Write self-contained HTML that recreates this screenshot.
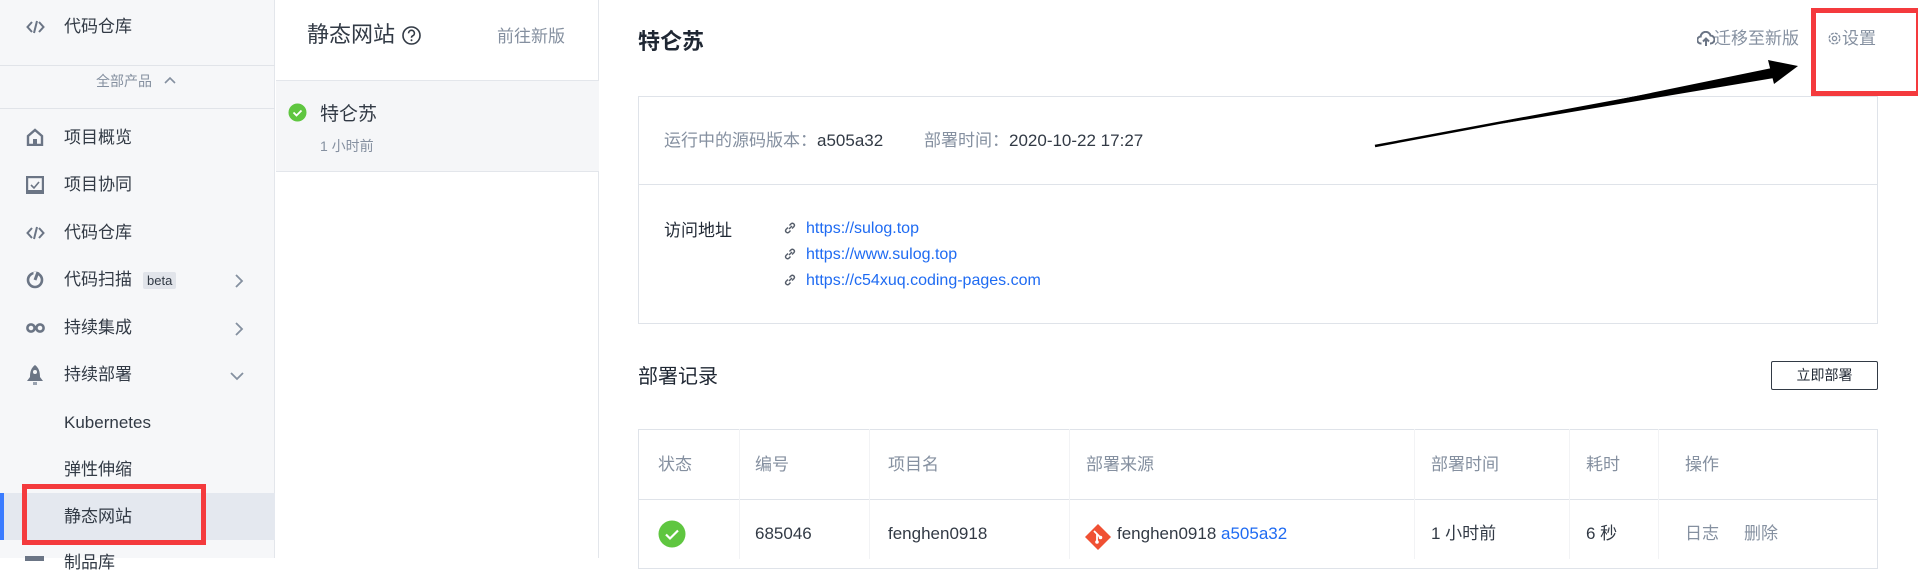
<!DOCTYPE html>
<html><head><meta charset="utf-8"><style>
*{margin:0;padding:0;box-sizing:border-box}
body{width:1918px;height:558px;overflow:hidden;background:#fff;font-family:"Liberation Sans","Noto Sans CJK SC",sans-serif;color:#323a45;position:relative}
.a{position:absolute;white-space:nowrap;line-height:1}
.sb{position:absolute;left:0;top:0;width:275px;height:558px;background:#f6f7f9;border-right:1px solid #e3e6eb}
.mid{position:absolute;left:276px;top:0;width:323px;height:558px;border-right:1px solid #e3e6eb}
.si{font-size:17px;color:#323a45}
.ic{position:absolute}
.g{color:#8590a0}
.lnk{color:#1f6bf2;font-size:16px}
.th{font-size:17px;color:#8590a0}
.td{font-size:17px;color:#323a45}
.vl{position:absolute;top:429px;width:1px;height:130px;background:#f2f3f5}
</style></head><body>
<div class="sb"></div>
<svg class="ic" style="left:26px;top:18px" width="19" height="18" viewBox="0 0 19 18"><path d="M6 4L1.5 9 6 14M13 4l4.5 5-4.5 5M11 3L8 15" stroke="#6b7585" stroke-width="2" fill="none"/></svg>
<div class="a si" style="left:64px;top:18px">代码仓库</div>
<div style="position:absolute;left:0;top:65px;width:275px;height:1px;background:#e1e4e9"></div>
<div class="a g" style="left:96px;top:74px;font-size:14px">全部产品</div>
<svg class="ic" style="left:164px;top:76px" width="12" height="8"><path d="M1 7l5-5 5 5" stroke="#8590a0" stroke-width="1.6" fill="none"/></svg>
<div style="position:absolute;left:0;top:108px;width:275px;height:1px;background:#e1e4e9"></div>

<svg class="ic" style="left:26px;top:128px" width="18" height="18"><path d="M2 8L9 2l7 6v9H2z" stroke="#6b7585" stroke-width="2.4" fill="none"/><rect x="7" y="11" width="4" height="6" fill="#6b7585"/></svg>
<div class="a si" style="left:64px;top:129px">项目概览</div>
<svg class="ic" style="left:26px;top:176px" width="18" height="18"><rect x="1" y="1" width="16" height="16" stroke="#6b7585" stroke-width="2.4" fill="none"/><path d="M5 9l3 3 5-6" stroke="#6b7585" stroke-width="1.6" fill="none"/><rect x="1" y="14" width="16" height="3" fill="#6b7585"/></svg>
<div class="a si" style="left:64px;top:176px">项目协同</div>
<svg class="ic" style="left:26px;top:224px" width="19" height="18" viewBox="0 0 19 18"><path d="M6 4L1.5 9 6 14M13 4l4.5 5-4.5 5M11 3L8 15" stroke="#6b7585" stroke-width="2" fill="none"/></svg>
<div class="a si" style="left:64px;top:224px">代码仓库</div>
<svg class="ic" style="left:26px;top:271px" width="18" height="18"><circle cx="9" cy="9" r="7" stroke="#6b7585" stroke-width="2.6" fill="none"/><path d="M9 9V1" stroke="#f6f7f9" stroke-width="3"/><path d="M9 9l3-8" stroke="#6b7585" stroke-width="3"/></svg>
<div class="a si" style="left:64px;top:271px">代码扫描</div>
<div class="a" style="left:143px;top:272px;font-size:13px;background:#e1e4ea;padding:2px 4px;border-radius:2px;color:#323a45">beta</div>
<svg class="ic" style="left:234px;top:274px" width="10" height="14"><path d="M2 1l6 6-6 6" stroke="#8590a0" stroke-width="1.8" fill="none"/></svg>
<svg class="ic" style="left:26px;top:322px" width="19" height="12"><circle cx="5" cy="6" r="3.6" stroke="#6b7585" stroke-width="2.6" fill="none"/><circle cx="14" cy="6" r="3.6" stroke="#6b7585" stroke-width="2.6" fill="none"/></svg>
<div class="a si" style="left:64px;top:319px">持续集成</div>
<svg class="ic" style="left:234px;top:322px" width="10" height="14"><path d="M2 1l6 6-6 6" stroke="#8590a0" stroke-width="1.8" fill="none"/></svg>
<svg class="ic" style="left:26px;top:364px" width="18" height="22"><path d="M9 1c4 3 5 7 5 12l3 4H1l3-4C4 8 5 4 9 1z" fill="#6b7585"/><circle cx="9" cy="8" r="2" fill="#f6f7f9"/><rect x="7" y="18" width="4" height="3" fill="#9aa3b0"/></svg>
<div class="a si" style="left:64px;top:366px">持续部署</div>
<svg class="ic" style="left:230px;top:371px" width="14" height="10"><path d="M1 2l6 6 6-6" stroke="#8590a0" stroke-width="1.8" fill="none"/></svg>
<div class="a si" style="left:64px;top:414px">Kubernetes</div>
<div class="a si" style="left:64px;top:461px">弹性伸缩</div>
<div style="position:absolute;left:0;top:493px;width:275px;height:47px;background:#e4e8ef"></div>
<div style="position:absolute;left:0;top:493px;width:4px;height:47px;background:#3b7cff"></div>
<div class="a si" style="left:64px;top:508px">静态网站</div>
<div style="position:absolute;left:22px;top:484px;width:184px;height:61px;border:5px solid #f43a3d"></div>
<div style="position:absolute;left:25px;top:556px;width:19px;height:5px;background:#6b7585"></div>
<div class="a si" style="left:64px;top:554px">制品库</div>

<div class="mid"></div>
<div class="a" style="left:307px;top:24px;font-size:22px;color:#323a45">静态网站</div>
<svg class="ic" style="left:401px;top:25px" width="21" height="21"><circle cx="10.5" cy="10.5" r="8.5" stroke="#323a45" stroke-width="1.6" fill="none"/><path d="M7.6 8.3a2.9 2.9 0 1 1 4 2.6c-.8.4-1.1.9-1.1 1.8" stroke="#323a45" stroke-width="1.6" fill="none"/><circle cx="10.5" cy="15.3" r="1" fill="#323a45"/></svg>
<div class="a g" style="left:497px;top:28px;font-size:17px">前往新版</div>
<div style="position:absolute;left:276px;top:80px;width:323px;height:92px;background:#f5f6f8;border-top:1px solid #e3e6eb;border-bottom:1px solid #e3e6eb"></div>
<svg class="ic" style="left:288px;top:103px" width="19" height="19"><circle cx="9.5" cy="9.5" r="9" fill="#5fc640"/><path d="M5.5 9.5l3 3 5-5" stroke="#fff" stroke-width="1.8" fill="none"/></svg>
<div class="a" style="left:320px;top:105px;font-size:19px">特仑苏</div>
<div class="a g" style="left:320px;top:139px;font-size:14px">1 小时前</div>

<div class="a" style="left:638px;top:31px;font-size:22px;font-weight:bold;color:#1f2733">特仑苏</div>
<svg class="ic" style="left:1697px;top:31px" width="18" height="16"><path d="M4.5 12.5H4a3.5 3.5 0 0 1-.3-7A5 5 0 0 1 13.5 4.5a4 4 0 0 1 0 8H13" stroke="#6b7585" stroke-width="2" fill="none"/><path d="M9 15V8M6 10.5l3-3 3 3" stroke="#6b7585" stroke-width="2" fill="none"/></svg>
<div class="a g" style="left:1714px;top:30px;font-size:17px">迁移至新版</div>
<svg class="ic" style="left:1827px;top:31px" width="15" height="15"><circle cx="7.5" cy="7.5" r="5.3" stroke="#8590a0" stroke-width="1.4" fill="none" stroke-dasharray="3 1.2"/><circle cx="7.5" cy="7.5" r="2.1" stroke="#8590a0" stroke-width="1.3" fill="none"/></svg>
<div class="a g" style="left:1842px;top:30px;font-size:17px">设置</div>
<div style="position:absolute;left:1811px;top:8px;width:110px;height:88px;border:5px solid #f43a3d"></div>

<div style="position:absolute;left:638px;top:96px;width:1240px;height:228px;border:1px solid #dfe3e9"></div>
<div style="position:absolute;left:638px;top:184px;width:1240px;height:1px;background:#dfe3e9"></div>
<div class="a g" style="left:664px;top:132px;font-size:17px">运行中的源码版本：<span style="color:#323a45">a505a32</span></div>
<div class="a g" style="left:924px;top:132px;font-size:17px">部署时间：<span style="color:#323a45">2020-10-22 17:27</span></div>
<div class="a" style="left:664px;top:222px;font-size:17px;color:#1f2733">访问地址</div>
<svg class="ic" style="left:783px;top:221px" width="14" height="14"><g stroke="#555d6a" stroke-width="1.4" fill="none"><path d="M6 8l3-3"/><path d="M5 6.5L3 8.5a2 2 0 0 0 2.8 2.8L7.5 9.5"/><path d="M9 7.5l2-2A2 2 0 0 0 8.2 2.7L6.5 4.5"/></g></svg>
<svg class="ic" style="left:783px;top:247px" width="14" height="14"><g stroke="#555d6a" stroke-width="1.4" fill="none"><path d="M6 8l3-3"/><path d="M5 6.5L3 8.5a2 2 0 0 0 2.8 2.8L7.5 9.5"/><path d="M9 7.5l2-2A2 2 0 0 0 8.2 2.7L6.5 4.5"/></g></svg>
<svg class="ic" style="left:783px;top:273px" width="14" height="14"><g stroke="#555d6a" stroke-width="1.4" fill="none"><path d="M6 8l3-3"/><path d="M5 6.5L3 8.5a2 2 0 0 0 2.8 2.8L7.5 9.5"/><path d="M9 7.5l2-2A2 2 0 0 0 8.2 2.7L6.5 4.5"/></g></svg>
<div class="a lnk" style="left:806px;top:221px">https://sulog.top</div>
<div class="a lnk" style="left:806px;top:247px">https://www.sulog.top</div>
<div class="a lnk" style="left:806px;top:273px">https://c54xuq.coding-pages.com</div>

<svg class="ic" style="left:0;top:0" width="1918" height="558"><path d="M1375 146L1772 72" stroke="#000" stroke-width="2.5"/><path d="M1500 124L1772 68 1774 78z" fill="#000"/><path d="M1798 66L1768 60 1774 84z" fill="#000"/></svg>

<div class="a" style="left:638px;top:367px;font-size:20px;color:#1f2733">部署记录</div>
<div class="a" style="left:1771px;top:361px;width:107px;height:29px;border:1.5px solid #323a45;border-radius:2px;font-size:14px;text-align:center;line-height:26px;color:#1f2733">立即部署</div>

<div style="position:absolute;left:638px;top:429px;width:1240px;height:140px;border:1px solid #dfe3e9"></div>
<div style="position:absolute;left:638px;top:499px;width:1240px;height:1px;background:#dfe3e9"></div>
<div class="vl" style="left:739px"></div>
<div class="vl" style="left:869px"></div>
<div class="vl" style="left:1069px"></div>
<div class="vl" style="left:1414px"></div>
<div class="vl" style="left:1569px"></div>
<div class="vl" style="left:1658px"></div>
<div class="a th" style="left:658px;top:456px">状态</div>
<div class="a th" style="left:755px;top:456px">编号</div>
<div class="a th" style="left:888px;top:456px">项目名</div>
<div class="a th" style="left:1086px;top:456px">部署来源</div>
<div class="a th" style="left:1431px;top:456px">部署时间</div>
<div class="a th" style="left:1586px;top:456px">耗时</div>
<div class="a th" style="left:1685px;top:456px">操作</div>

<svg class="ic" style="left:658px;top:520px" width="28" height="28"><circle cx="14" cy="14" r="13.5" fill="#5fc640"/><path d="M8 14.5l4 4 8-8" stroke="#fff" stroke-width="2.2" fill="none"/></svg>
<div class="a td" style="left:755px;top:525px">685046</div>
<div class="a td" style="left:888px;top:525px">fenghen0918</div>
<svg class="ic" style="left:1084px;top:523px" width="28" height="28"><path d="M14 1L27 14 14 27 1 14z" fill="#f05033"/><path d="M10 8l6 6M13 11v8" stroke="#fff" stroke-width="1.8"/><circle cx="13" cy="19" r="1.8" fill="#fff"/><circle cx="16.5" cy="14.5" r="1.8" fill="#fff"/></svg>
<div class="a td" style="left:1117px;top:525px">fenghen0918 <span style="color:#1f6bf2">a505a32</span></div>
<div class="a td" style="left:1431px;top:525px">1 小时前</div>
<div class="a td" style="left:1586px;top:525px">6 秒</div>
<div class="a th" style="left:1685px;top:525px">日志</div>
<div class="a th" style="left:1744px;top:525px">删除</div>
</body></html>
